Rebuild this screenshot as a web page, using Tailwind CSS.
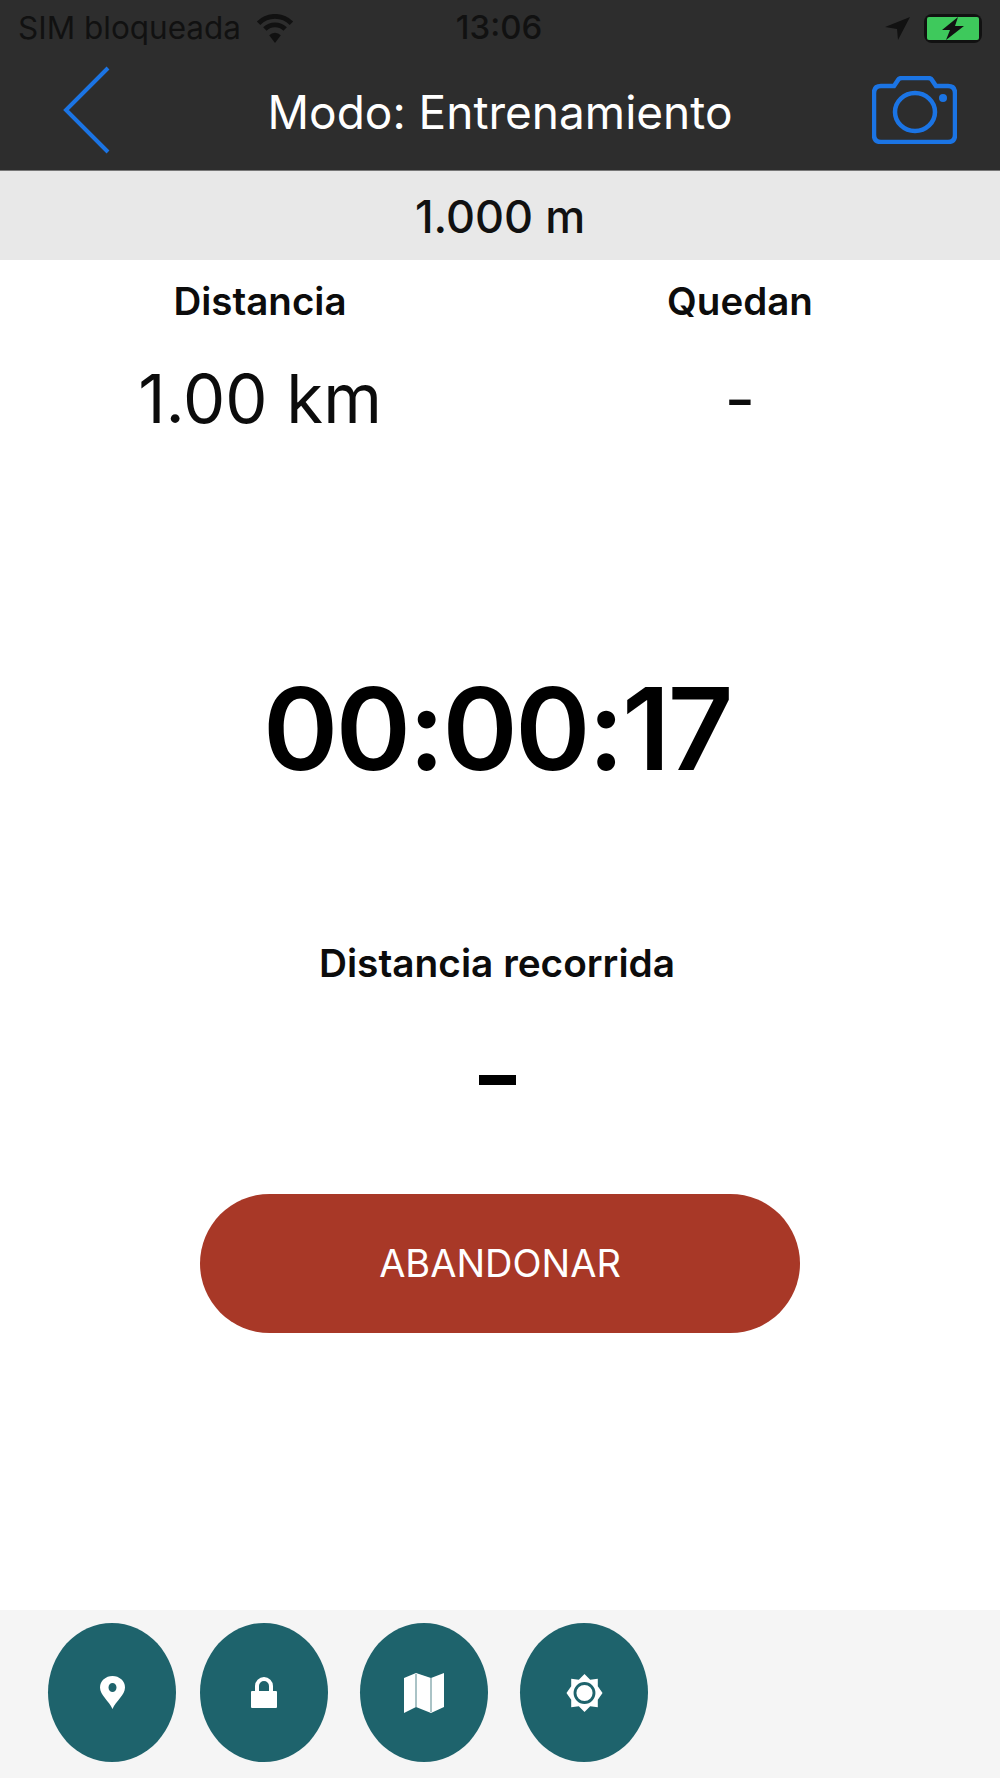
<!DOCTYPE html>
<html lang="es">
<head>
  <meta charset="UTF-8" />
  <title>Modo: Entrenamiento</title>
  <script src="https://cdn.jsdelivr.net/npm/@tailwindcss/browser@4"></script>
</head>
<body class="bg-white font-['Inter','Liberation_Sans',sans-serif]">
  <div class="w-[1000px] h-[1778px] flex flex-col overflow-hidden">

    <!-- Header -->
    <header class="h-[171px] bg-[#2d2d2d] border-b border-b-[#777] flex flex-col">
      <div class="h-[56px] flex items-center px-[18px] text-[#111] relative">
        <span class="text-[31.5px]">SIM bloqueada</span>
        <svg class="ml-[14px]" width="40" height="29" viewBox="0 0 40 30" fill="none" stroke="#111" stroke-width="5">
          <path d="M3 9.5 A24 24 0 0 1 37 9.5" />
          <path d="M9.5 15.5 A15 15 0 0 1 30.5 15.5" />
          <path d="M20 30 L14 22 A8 8 0 0 1 26 22 Z" fill="#111" stroke="none" />
        </svg>
        <span class="absolute left-0 w-full text-center text-[33px] font-medium pr-[2px]">13:06</span>
        <svg class="ml-auto mr-[14px]" width="25" height="23" viewBox="0 0 25 23" fill="#111"><path d="M25 0 L0 10 L12 12 L13 23 Z" /></svg>
        <div class="relative w-[58px] h-[29px] bg-[#111] rounded-[8px] p-[3px]">
          <div class="w-full h-full bg-[#3ec95c] rounded-[2px]"></div>
          <svg class="absolute left-[16px] top-[3px]" width="26" height="23" viewBox="0 0 26 23" fill="#111"><path d="M18 0 L2 13 L10 13 L6 23 L24 9 L15 9 Z" /></svg>
        </div>
      </div>
      <div class="flex-1 flex items-center justify-between pl-[63px] pr-[43px] relative">
        <svg class="mt-[-6px]" width="50" height="88" viewBox="0 0 50 88" fill="none" stroke="#1b74e4" stroke-width="4"><path d="M45 2 L3 44 L45 86" /></svg>
        <h1 class="absolute left-0 w-full text-center text-white text-[46px] font-normal mt-[-2px]">Modo: Entrenamiento</h1>
        <svg class="mt-[-6px]" width="85" height="68" viewBox="0 0 85 68" fill="none" stroke="#1b74e4" stroke-width="4.5">
          <path d="M9 10 H22 L26 4 Q27 2 30 2 H56 Q59 2 60 4 L64 10 H76 Q83 10 83 17 V59 Q83 66 76 66 H9 Q2 66 2 59 V17 Q2 10 9 10 Z" />
          <ellipse cx="43" cy="36" rx="20" ry="19" />
          <circle cx="71" cy="22" r="4" fill="#1b74e4" stroke="none" />
        </svg>
      </div>
    </header>

    <!-- Target distance -->
    <div class="h-[89px] bg-[#e8e8e8] flex items-center justify-center text-[45px] font-medium text-[#111] pt-[2px]">1.000 m</div>

    <!-- Stats -->
    <main class="flex-1 flex flex-col items-center text-[#0c0c0c]">
      <div class="w-full grid grid-cols-2 px-[20px] text-center mt-[19px]">
        <div>
          <div class="text-[38.5px] font-semibold leading-[44px]">Distancia</div>
          <div class="text-[67px] leading-[80px] mt-[36px]">1.00 km</div>
        </div>
        <div>
          <div class="text-[38.5px] font-semibold leading-[44px]">Quedan</div>
          <div class="text-[67px] leading-[80px] mt-[36px]">-</div>
        </div>
      </div>

      <div class="text-[114px] font-semibold leading-[140px] tracking-[-2.4px] mt-[220px] mr-[6px] text-black">00:00:17</div>

      <div class="text-[38.8px] font-semibold leading-[44px] mt-[142px] mr-[6px]">Distancia recorrida</div>
      <div class="w-[37px] h-[10px] bg-black mt-[90px] mr-[6px]"></div>

      <button class="w-[600px] h-[139px] mt-[109px] bg-[#a83827] text-white text-[38px] rounded-[70px]">ABANDONAR</button>
    </main>

    <!-- Bottom toolbar -->
    <footer class="h-[168px] bg-[#f5f5f5] flex items-start pt-[13px] pl-[48px]">
      <div class="w-[128px] h-[139px] rounded-[50%] bg-[#1e636c] flex items-center justify-center">
        <svg width="25" height="33" viewBox="0 0 25 33"><path fill-rule="evenodd" fill="#fff" d="M12.5 33 C9 25 0 19 0 11.5 A12.5 11.5 0 0 1 25 11.5 C25 19 16 25 12.5 33 Z M12.5 7 A4 4.5 0 1 0 12.5 16 A4 4.5 0 1 0 12.5 7 Z" /></svg>
      </div>
      <div class="w-[128px] h-[139px] rounded-[50%] bg-[#1e636c] flex items-center justify-center ml-[24px]">
        <svg width="26" height="31" viewBox="0 0 26 31"><path fill="#fff" fill-rule="evenodd" d="M1 14 H4 V9 A9 9 0 0 1 22 9 V14 H25 Q26 14 26 15 V30 Q26 31 25 31 H1 Q0 31 0 30 V15 Q0 14 1 14 Z M8 14 H18 V9 A5 5 0 0 0 8 9 Z" /></svg>
      </div>
      <div class="w-[128px] h-[139px] rounded-[50%] bg-[#1e636c] flex items-center justify-center ml-[32px]">
        <svg width="40" height="40" viewBox="0 0 40 40"><path fill="#fff" d="M0 5 L12 0 L27 5 L40 0 V34 L27 40 L12 34 L0 40 Z" /><path d="M12 1 V34 M27 5 V39" stroke="#8fb0b4" stroke-width="1.5" /></svg>
      </div>
      <div class="w-[128px] h-[139px] rounded-[50%] bg-[#1e636c] flex items-center justify-center ml-[32px]">
        <svg width="37" height="38" viewBox="0 0 38 40"><path fill="#fff" d="M19 0 L25 6 L33 5 L33 13 L38 20 L33 27 L33 35 L25 34 L19 40 L13 34 L5 35 L5 27 L0 20 L5 13 L5 5 L13 6 Z" /><ellipse cx="19" cy="20" rx="10" ry="10" fill="none" stroke="#1e636c" stroke-width="3" /></svg>
      </div>
    </footer>
  </div>
</body>
</html>
